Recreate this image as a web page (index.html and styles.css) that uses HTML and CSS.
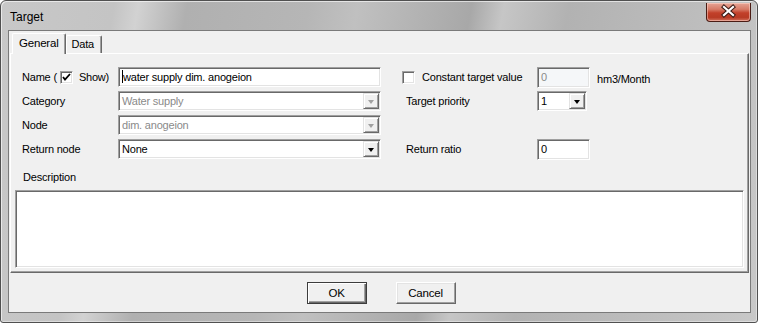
FILE: index.html
```html
<!DOCTYPE html>
<html lang="en">
<head>
<meta charset="UTF-8">
<title>Target</title>
<link rel="stylesheet" href="styles.css">
</head>
<body>
<div class="window">
    <!-- 타이틀바 -->
    <div class="titlebar">
        <span class="title">Target</span>
        <div class="close">
            <svg width="45" height="19" viewBox="0 0 45 19">
                <path d="M18 5 L27 13 M27 5 L18 13" stroke="#3a1a14" stroke-width="4.2" stroke-linecap="square"/>
                <path d="M18 5 L27 13 M27 5 L18 13" stroke="#fff" stroke-width="2.2" stroke-linecap="square"/>
            </svg>
        </div>
    </div>

    <div class="client">
        <div class="tabs">
            <div class="tab selected">General</div>
            <div class="tab">Data</div>
        </div>

        <div class="panel">
            <div class="form">
                <div class="label name-label">Name (<span class="check checked"><svg width="9" height="9" viewBox="0 0 9 9"><path d="M1 4 L3 6.5 L8 1" stroke="#000" stroke-width="1.8" fill="none"/></svg></span> Show)</div>
                <div class="field"><span class="caret"></span>water supply dim. anogeion</div>
                <div></div>
                <div class="label"><span class="check"></span>Constant target value</div>
                <div class="right-cell"><div class="field small disabled">0</div><span class="unit">hm3/Month</span></div>

                <div class="label">Category</div>
                <div class="field combo disabled">Water supply<span class="drop"><i class="arrow"></i></span></div>
                <div></div>
                <div class="label pad">Target priority</div>
                <div class="right-cell"><div class="field combo prio">1<span class="drop"><i class="arrow"></i></span></div></div>

                <div class="label">Node</div>
                <div class="field combo disabled">dim. anogeion<span class="drop"><i class="arrow"></i></span></div>
                <div></div>
                <div></div>
                <div></div>

                <div class="label">Return node</div>
                <div class="field combo">None<span class="drop"><i class="arrow"></i></span></div>
                <div></div>
                <div class="label pad">Return ratio</div>
                <div class="right-cell"><div class="field small">0</div></div>
            </div>

            <div class="desc-label">Description</div>
            <div class="desc"></div>
        </div>

        <div class="buttons">
            <div class="btn default">OK</div>
            <div class="btn">Cancel</div>
        </div>
    </div>
</div>
</body>
</html>
```

FILE: styles.css
```css
body{
    margin: 0;
    background: #fff;
    font-family: "Liberation Sans", Arial, sans-serif;
    font-size: 11px;
    letter-spacing: -0.2px;
    color: #000;
}
/* 창 전체 (윈도우7 베이직 테마 흉내) */
.window{
    width: 758px;
    height: 323px;
    box-sizing: border-box;
    border: 1px solid #505050;
    border-radius: 6px 6px 3px 3px;
    background: linear-gradient(100deg, #c8c8c8 0%, #c4c4c4 14%, #d2d2d2 17%, #b0b0b0 23%, #b6b6b6 38%, #c0c0c0 44%, #a8a8a8 58%, #c6c6c6 62%, #b2b2b2 70%, #bdbdbd 86%, #c8c8c8 100%);
    display: flex;
    flex-direction: column;
    box-shadow: inset 1px 1px rgba(255,255,255,0.6), inset -1px -1px rgba(255,255,255,0.4);
}
.titlebar{
    height: 29px;
    display: flex;
    justify-content: space-between;
    align-items: flex-start;
}
.title{
    font-size: 12px;
    letter-spacing: 0;
    margin: 9px 0 0 9px;
}
.close{
    width: 45px;
    height: 19px;
    margin: 2px 6px 0 0;
    box-sizing: border-box;
    border: 1px solid #4a1c14;
    border-top: none;
    border-radius: 0 0 4px 4px;
    background: linear-gradient(#e6a596 0%, #d77b67 35%, #c2402a 55%, #b83a24 80%, #d2715c 100%);
    box-shadow: inset 0 0 0 1px rgba(255,220,210,0.5);
}
.close svg{
    display: block;
    margin: -1px 0 0 -1px;
}
/* 클라이언트 영역 */
.client{
    flex: 1;
    margin: 0 6px 9px 7px;
    border: 1px solid #7a7a7a;
    background: #f0f0f0;
    display: flex;
    flex-direction: column;
}
.tabs{
    height: 22px;
    flex: none;
    display: flex;
    align-items: flex-end;
    padding-left: 3px;
}
.tab{
    height: 17px;
    line-height: 17px;
    padding: 0 7px 0 5px;
    border-left: 1px solid #fff;
    border-top: 1px solid #fff;
    border-right: 1px solid #696969;
    box-shadow: inset -1px 0 #a0a0a0;
    border-radius: 2px 2px 0 0;
}
.tab.selected{
    height: 20px;
    line-height: 18px;
    padding: 0 6px;
    position: relative;
    top: 1px;
    background: #f0f0f0;
    z-index: 1;
    font-size: 11.5px;
}
.panel{
    flex: 1;
    margin: 0 1px;
    border-top: 1px solid #fff;
    border-left: 1px solid #fff;
    border-right: 1px solid #696969;
    border-bottom: 1px solid #696969;
    box-shadow: inset -1px -1px #a0a0a0;
    display: flex;
    flex-direction: column;
    padding: 13px 4px 4px 4px;
}
/* 입력 폼 그리드 */
.form{
    display: grid;
    grid-template-columns: 96px 263px 21px 135px auto;
    grid-auto-rows: 20px;
    row-gap: 4px;
    padding-left: 7px;
}
.label{
    display: flex;
    align-items: center;
    white-space: nowrap;
}
.label.pad{
    padding-left: 4px;
}
.name-label .check{
    margin: 0 6px 0 3px;
}
.check{
    width: 13px;
    height: 13px;
    box-sizing: border-box;
    background: #fff;
    border: 1px solid;
    border-color: #a0a0a0 #fff #fff #a0a0a0;
    box-shadow: inset 1px 1px #696969, inset -1px -1px #e3e3e3;
    display: inline-flex;
    align-items: center;
    justify-content: center;
    margin-right: 7px;
}
.check svg{
    display: block;
}
.field{
    position: relative;
    height: 20px;
    box-sizing: border-box;
    background: #fff;
    border: 1px solid;
    border-color: #a0a0a0 #fff #fff #a0a0a0;
    box-shadow: inset 1px 1px #696969, inset -1px -1px #e3e3e3;
    padding: 0 3px;
    line-height: 18px;
    white-space: nowrap;
    overflow: hidden;
}
.field.disabled{
    color: #8a8a8a;
}
.field.small{
    width: 53px;
    height: 21px;
}
.field.small.disabled{
    background: #f5f7f9;
}
.field.prio{
    width: 50px;
}
.caret{
    display: inline-block;
    width: 1px;
    height: 13px;
    background: #000;
    vertical-align: -2px;
}
.right-cell{
    display: flex;
    align-items: center;
}
.unit{
    margin-left: 7px;
    margin-top: 4px;
}
/* 콤보박스 버튼 */
.drop{
    position: absolute;
    right: 1px;
    top: 1px;
    width: 16px;
    height: 16px;
    box-sizing: border-box;
    background: #f0f0f0;
    border-top: 1px solid #e3e3e3;
    border-left: 1px solid #e3e3e3;
    border-right: 1px solid #696969;
    border-bottom: 1px solid #696969;
    box-shadow: inset 1px 1px #fff, inset -1px -1px #a0a0a0;
    display: flex;
    align-items: center;
    justify-content: center;
}
.arrow{
    width: 0;
    height: 0;
    border-left: 3.5px solid transparent;
    border-right: 3.5px solid transparent;
    border-top: 4px solid #000;
    margin-top: 1px;
}
.disabled .arrow{
    border-top-color: #a0a0a0;
}
.desc-label{
    margin: 12px 0 0 8px;
    line-height: 13px;
}
.desc{
    flex: 1;
    margin-top: 6px;
    box-sizing: border-box;
    background: #fff;
    border: 1px solid;
    border-color: #a0a0a0 #fff #fff #a0a0a0;
    box-shadow: inset 1px 1px #696969, inset -1px -1px #e3e3e3;
}
/* 하단 버튼 */
.buttons{
    height: 39px;
    flex: none;
    display: flex;
    justify-content: center;
    align-items: flex-start;
    gap: 29px;
    padding: 9px 0 0 3px;
    box-sizing: border-box;
}
.btn{
    width: 60px;
    height: 22px;
    box-sizing: border-box;
    border: 1px solid;
    border-color: #fff #696969 #696969 #fff;
    box-shadow: inset -1px -1px #a0a0a0, inset 1px 1px #e3e3e3;
    text-align: center;
    line-height: 20px;
    font-size: 11.5px;
}
.btn.default{
    border: 1px solid #3c3c3c;
    box-shadow: inset 1px 1px #fff, inset -1px -1px #696969, inset -2px -2px #a0a0a0;
}
```
